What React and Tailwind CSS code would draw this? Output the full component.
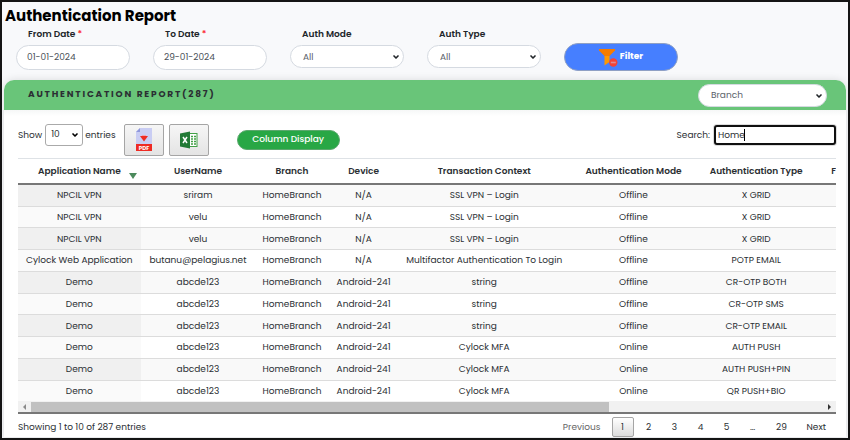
import React from 'react';
import { ChevronDown } from 'lucide-react';

const columns = [
  { label: 'Application Name', width: 'w-[15%]' },
  { label: 'UserName', width: 'w-[14%]' },
  { label: 'Branch', width: 'w-[9%]' },
  { label: 'Device', width: 'w-[8.5%]' },
  { label: 'Transaction Context', width: 'w-[21%]' },
  { label: 'Authentication Mode', width: 'w-[15.5%]' },
  { label: 'Authentication Type', width: 'w-[14.5%]' },
];

const rows = [
  ['NPCIL VPN', 'sriram', 'HomeBranch', 'N/A', 'SSL VPN – Login', 'Offline', 'X GRID'],
  ['NPCIL VPN', 'velu', 'HomeBranch', 'N/A', 'SSL VPN – Login', 'Offline', 'X GRID'],
  ['NPCIL VPN', 'velu', 'HomeBranch', 'N/A', 'SSL VPN – Login', 'Offline', 'X GRID'],
  ['Cylock Web Application', 'butanu@pelagius.net', 'HomeBranch', 'N/A', 'Multifactor Authentication To Login', 'Offline', 'POTP EMAIL'],
  ['Demo', 'abcde123', 'HomeBranch', 'Android-241', 'string', 'Offline', 'CR-OTP BOTH'],
  ['Demo', 'abcde123', 'HomeBranch', 'Android-241', 'string', 'Offline', 'CR-OTP SMS'],
  ['Demo', 'abcde123', 'HomeBranch', 'Android-241', 'string', 'Offline', 'CR-OTP EMAIL'],
  ['Demo', 'abcde123', 'HomeBranch', 'Android-241', 'Cylock MFA', 'Online', 'AUTH PUSH'],
  ['Demo', 'abcde123', 'HomeBranch', 'Android-241', 'Cylock MFA', 'Online', 'AUTH PUSH+PIN'],
  ['Demo', 'abcde123', 'HomeBranch', 'Android-241', 'Cylock MFA', 'Online', 'QR PUSH+BIO'],
];

const Field = ({ id, label, required, children }) => (
  <div className="w-[114px]">
    <label htmlFor={id} className="block h-[17px] pl-3 text-[9px] leading-3 font-semibold text-[#212529]">
      {label} {required && <span className="text-red-500">*</span>}
    </label>
    {children}
  </div>
);

const DateInput = ({ id, value }) => (
  <input
    id={id}
    type="text"
    defaultValue={value}
    className="block w-full h-[25px] rounded-full border border-[#d5dae1] bg-white px-[10px] text-[9px] text-[#495057]"
  />
);

const PillSelect = ({ id, option, label }) => (
  <div className="relative">
    <select
      id={id}
      aria-label={label}
      className="block w-full h-[23px] appearance-none rounded-full border border-[#d5dae1] bg-white px-3 pt-[2px] text-[9px] text-[#5b626a]"
    >
      <option>{option}</option>
    </select>
    <ChevronDown className="pointer-events-none absolute right-1 top-2 h-2 w-2 text-[#212529]" strokeWidth={5} />
  </div>
);

const FilterIcon = () => (
  <svg viewBox="0 0 19 19" className="h-[19px] w-[19px]">
    <path d="M0 1h16v1.500L10.500 8H5.500L0 2.500z" fill="#f57c00" />
    <path d="M5.500 8h5v6l-5 3.500z" fill="#ff9800" />
    <circle cx="14.300" cy="14.500" r="4.200" fill="#f44336" />
    <rect x="11.800" y="13.700" width="5" height="1.600" fill="#dd8a95" />
  </svg>
);

const PdfIcon = () => (
  <svg viewBox="0 0 18 24" className="h-6 w-[18px]">
    <path d="M5 0h12v17H1V4z" fill="#c9cdf3" />
    <path d="M5 0v4H1z" fill="#8f98dc" />
    <path d="M5 8h8l-4 5.500z" fill="#ee2b24" />
    <path d="M7 7h4v1H7z" fill="#f0a3ad" />
    <rect x="1" y="16" width="16" height="7" fill="#ee2b24" />
    <text x="9" y="21.500" textAnchor="middle" fontSize="5.500" fontWeight="700" fill="#fff">PDF</text>
  </svg>
);

const ExcelIcon = () => (
  <svg viewBox="0 0 18 18" className="h-[18px] w-[18px]">
    <rect x="9" y="2.500" width="8" height="13" fill="#fff" stroke="#43a047" />
    <path d="M11 5.500h2M14 5.500h2M11 8h2M14 8h2M11 10.500h2M14 10.500h2M11 13h2M14 13h2" stroke="#43a047" strokeWidth="1.500" />
    <path d="M0 2.500L10 .5v17L0 15.500z" fill="#217a35" />
    <path d="M3 6l4 6M7 6l-4 6" stroke="#fff" strokeWidth="1.500" />
  </svg>
);

const Filters = () => (
  <div className="flex items-start gap-[23px] px-3">
    <Field id="from" label="From Date" required>
      <DateInput id="from" value="01-01-2024" />
    </Field>
    <Field id="to" label="To Date" required>
      <DateInput id="to" value="29-01-2024" />
    </Field>
    <Field id="mode" label="Auth Mode">
      <PillSelect id="mode" option="All" />
    </Field>
    <Field id="type" label="Auth Type">
      <PillSelect id="type" option="All" />
    </Field>
    <button
      type="button"
      className="mt-[15px] flex h-7 w-[114px] items-center justify-center gap-[2px] rounded-full border border-[#8fa0c4] bg-[#467fff] text-[9px] font-bold text-white"
    >
      <FilterIcon />
      Filter
    </button>
  </div>
);

const Toolbar = () => (
  <div className="flex items-start pt-[14px] pb-[2px]">
    <label htmlFor="length" className="pr-[3px] text-[9px] leading-[22px]">Show</label>
    <div className="relative">
      <select
        id="length"
        className="block h-[22px] w-[38px] appearance-none rounded-[3px] border border-[#aaa] bg-white pl-[5px] text-[9px]"
      >
        <option>10</option>
      </select>
      <ChevronDown className="pointer-events-none absolute right-1 top-[7px] h-2 w-2 text-black" strokeWidth={5} />
    </div>
    <span className="pl-[2px] text-[9px] leading-[22px]">entries</span>
    <button type="button" aria-label="PDF" className="ml-2 flex h-8 w-10 items-center justify-center rounded-[2px] border border-[#a5a5a5] bg-linear-to-b from-[#f6f6f6] to-[#e4e4e4]">
      <PdfIcon />
    </button>
    <button type="button" aria-label="Excel" className="ml-[5px] flex h-8 w-10 items-center justify-center rounded-[2px] border border-[#a5a5a5] bg-linear-to-b from-[#f6f6f6] to-[#e4e4e4]">
      <ExcelIcon />
    </button>
    <button type="button" className="mt-[6px] ml-7 h-5 w-[103px] rounded-full border border-[#5ba86d] bg-[#28a745] text-[9px] font-medium text-white">
      Column Display
    </button>
    <div className="ml-auto flex items-center gap-1">
      <label htmlFor="search" className="text-[9px] leading-[22px]">Search:</label>
      <div className="relative">
        <input
          id="search"
          type="text"
          defaultValue="Home"
          className="block h-5 w-[122px] rounded-[3px] border-2 border-[#101010] bg-white px-[2px] text-[9px] ring-1 ring-[#dcdcdc]"
        />
        <span className="absolute left-[30px] top-1 h-3 w-px bg-black" />
      </div>
    </div>
  </div>
);

const ReportTable = () => (
  <div className="overflow-hidden border-b-2 border-[#777]">
    <table className="h-[243px] w-full table-fixed border-collapse border-t border-[#dee2e6] text-center text-[9px] leading-3">
      <thead>
        <tr className="h-[25px] border-b-2 border-[#777]">
          {columns.map((col, i) => (
            <th key={col.label} className={`${col.width} whitespace-nowrap p-0 font-semibold`}>
              <span className="relative">
                {col.label}
                {i === 0 && (
                  <svg viewBox="0 0 8 6" className="absolute -right-4 top-2 h-[6px] w-2">
                    <path d="M0 0h8L4 6z" fill="#4c8a5c" />
                  </svg>
                )}
              </span>
            </th>
          ))}
          <th className="p-0 text-right font-semibold">F</th>
        </tr>
      </thead>
      <tbody>
        {rows.map((row, r) => (
          <tr key={r} className="border-t border-[#dcdcdc] odd:bg-[#f9f9f9] even:bg-white">
            {row.map((cell, c) => (
              <td
                key={c}
                className={`whitespace-nowrap p-0 ${c === 0 ? (r % 2 === 0 ? 'bg-[#f0f0f0]' : 'bg-[#fafafa]') : ''}`}
              >
                {cell}
              </td>
            ))}
            <td className="p-0" />
          </tr>
        ))}
      </tbody>
    </table>
    {/* Horizontal scrollbar */}
    <div className="flex h-[11px] items-center bg-[#f1f1f1]">
      <svg viewBox="0 0 13 10" className="h-[10px] w-[13px]">
        <path d="M8 2v6L5 5z" fill="#8a8a8a" />
      </svg>
      <div className="flex h-[10px] flex-1">
        <div className="w-[73%] bg-[#c1c1c1]" />
      </div>
      <svg viewBox="0 0 13 10" className="h-[10px] w-[13px]">
        <path d="M5 2v6l3-3z" fill="#333" />
      </svg>
    </div>
  </div>
);

const Pagination = () => (
  <nav className="flex items-center text-[9px] leading-[18px]">
    <button type="button" className="mr-[11px] text-[#666]">Previous</button>
    <button type="button" className="mr-1 h-5 w-[22px] rounded-[2px] border border-[#a5a5a5] bg-linear-to-b from-white to-[#dcdcdc]">1</button>
    {['2', '3', '4', '5'].map((page) => (
      <button key={page} type="button" className="w-[22px] mr-1">{page}</button>
    ))}
    <span className="mr-1 w-[22px] text-center">…</span>
    <button type="button" className="w-[28px]">29</button>
    <button type="button" className="mr-[10px] ml-[11px]">Next</button>
  </nav>
);

const App = () => {
  return (
    <div className="border-2 border-[#151515] bg-[#f8f9fb] px-[2px] pb-px font-[Poppins,Inter,sans-serif] text-[#2b2f33]">
      <h1 className="pl-px pt-1 text-[15px] leading-[19px] font-bold text-black">Authentication Report</h1>
      <div className="pt-[3px] pb-[9px]">
        <Filters />
      </div>

      <section className="rounded-t-[10px] bg-white shadow-[0_0_8px_rgba(0,0,0,0.12)]">
        <header className="flex h-[30px] items-center justify-between rounded-t-[10px] bg-[#69c579] pl-6 pr-[19px]">
          <h2 className="text-[9px] font-bold tracking-[0.2em]">AUTHENTICATION REPORT(287)</h2>
          <div className="w-[129px]">
            <PillSelect id="branch" option="Branch" label="Branch" />
          </div>
        </header>
        <div className="bg-linear-to-b from-[#f6f7f7] from-0% to-white to-[6px] pl-[14px] pr-[10px]">
          <Toolbar />
          <ReportTable />
          <div className="flex items-center justify-between pt-[3px]">
            <p className="text-[9px] leading-[18px]">Showing 1 to 10 of 287 entries</p>
            <Pagination />
          </div>
        </div>
      </section>
    </div>
  );
};

export default App;
